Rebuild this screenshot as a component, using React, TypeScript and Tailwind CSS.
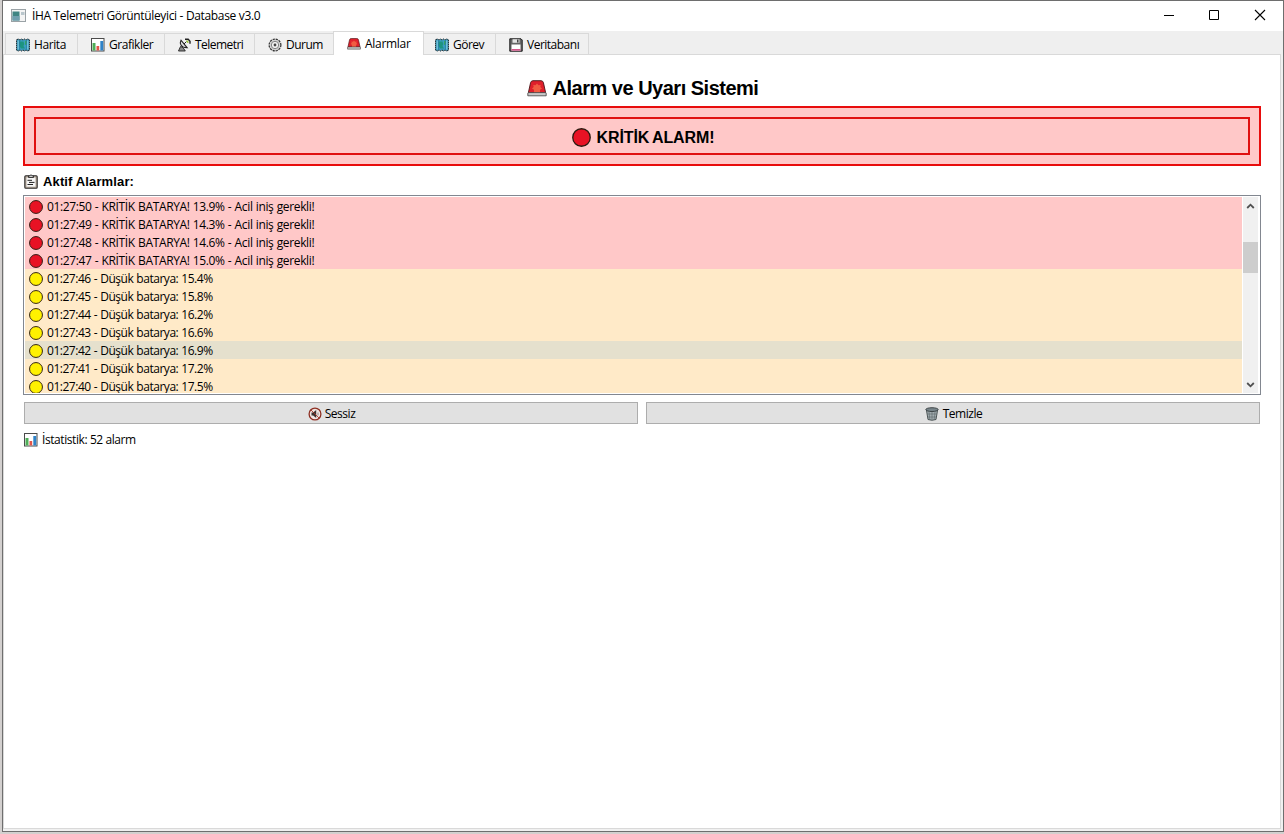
import React from 'react';

type IconProps = { className?: string };

const MapIcon = ({ className = '' }: IconProps) => (
  <svg viewBox="0 0 14 14" className={`shrink-0 ${className}`}>
    <path d="M.6 1.800 2.300 1l1.700 1 1.500-1L7 2l1.500-1L10 2l1.700-1 1.700.8v10.400l-1.700.8-1.700-1-1.500 1L7 12l-1.500 1L4 12l-1.700 1-1.700-.8z" fill="#3c9fc0" stroke="#18242c" strokeWidth="1" strokeDasharray="1.600 .5" />
    <path d="M3.500 3.500h4l.8 2.500L7.500 8 9 10.500H5L3.500 8z" fill="#1d9480" />
    <path d="M9 3h1.800l-.3 3.500-1.500.5z" fill="#38a860" />
    <path d="M2.200 2.500v9M11.800 2.500v9" stroke="#8fd3e4" strokeWidth=".9" />
    <path d="M3.600 2.500v9M10.400 2.500v9" stroke="#1f6f9a" strokeWidth=".6" />
  </svg>
);

const ChartIcon = ({ className = '' }: IconProps) => (
  <svg viewBox="0 0 14 14" className={`shrink-0 ${className}`}>
    <rect x=".5" y=".5" width="12.500" height="12.500" fill="#fff" stroke="#4b4b4b" />
    <path d="M1.500 5H4.500v7.500H1.500z" fill="#4fae58" />
    <path d="M5.500 8H8.200v4.500H5.500z" fill="#e2554a" />
    <path d="M9.300 3H12.200v9.500H9.300z" fill="#2f83c8" />
  </svg>
);

const DishIcon = ({ className = '' }: IconProps) => (
  <svg viewBox="0 0 14 14" className={`shrink-0 ${className}`}>
    <path d="M3.500 8.500 1.500 13h6.800L6 9.500z" fill="#8b8b8b" stroke="#222" strokeWidth=".9" />
    <path d="M4 2.200C2.200 5.500 4 10 10.200 9.800z" fill="#dedede" stroke="#222" strokeWidth="1.100" />
    <path d="M7 6l2.500-2.500" stroke="#222" strokeWidth="1" />
    <path d="M8 1.300h3.200L13 3.200v2.600" fill="none" stroke="#222" strokeWidth="1.400" />
    <path d="M9 2.500h2l.8 2-1.600.5z" fill="#9bc53d" />
  </svg>
);

const GearIcon = ({ className = '' }: IconProps) => (
  <svg viewBox="0 0 14 14" className={`shrink-0 ${className}`}>
    <circle cx="7" cy="7" r="5.900" fill="#d4d4d4" stroke="#333" strokeWidth="1.200" strokeDasharray="2.200 .89" />
    <circle cx="7" cy="7" r="3.700" fill="#f1f1f1" stroke="#777" strokeWidth=".9" />
    <circle cx="7" cy="7" r="1.400" fill="#444" />
  </svg>
);

const SirenIcon = ({ className = '' }: IconProps) => (
  <svg viewBox="0 0 20 17" preserveAspectRatio="none" className={`shrink-0 ${className}`}>
    <path d="M1.300 13 3.600 2.600Q4.100.7 6 .7h8q1.900 0 2.400 1.900L18.700 13z" fill="#df1f2b" stroke="#4a1417" strokeWidth=".9" />
    <path d="m10 3.600 1.500 1.600 2.200-.3-.4 2.200 1.700 1.500-2 1.100V13H7V9.700L5 8.600l1.700-1.500-.4-2.200 2.200.3z" fill="#f15c42" />
    <path d="M.8 13.200 1.600 12.600h16.800l.8.6v2.600H.8z" fill="#c9c9c9" stroke="#3c3c3c" strokeWidth=".8" />
  </svg>
);

const DiskIcon = ({ className = '' }: IconProps) => (
  <svg viewBox="0 0 14 14" className={`shrink-0 ${className}`}>
    <path d="M.8.800h11.200l1.200 1.200v11.200H.8z" fill="#666" stroke="#1e1e1e" />
    <path d="M3.500 1.200h7v3.600h-7z" fill="#e4e4e4" />
    <path d="M8 1.500h1.500v3H8z" fill="#444" />
    <path d="M2.500 6.500h9v6.200h-9z" fill="#fff" />
    <path d="M2.500 11h9v1.700h-9z" fill="#d4558a" />
  </svg>
);

const ClipboardIcon = ({ className = '' }: IconProps) => (
  <svg viewBox="0 0 14 15" className={`shrink-0 ${className}`}>
    <rect x=".8" y="1.800" width="12.400" height="12.400" rx="1" fill="#b3a698" stroke="#2b2b2b" strokeWidth="1.100" />
    <path d="M2.500 3.500h9v9.200h-9z" fill="#f5f5f5" />
    <path d="M4.500 3.500V1.800h1.200Q7-.2 8.300 1.800h1.200v1.700z" fill="#ccc" stroke="#2b2b2b" strokeWidth=".9" />
    <path d="M3.500 6.300h4.500M5 8.400h5.500M3.500 10.500h5.500" stroke="#222" strokeWidth="1" />
  </svg>
);

const MuteIcon = ({ className = '' }: IconProps) => (
  <svg viewBox="0 0 14 14" className={`shrink-0 ${className}`}>
    <circle cx="7" cy="7" r="5.900" fill="#f0e6e2" stroke="#8e2f22" strokeWidth="1.300" />
    <path d="M3.500 5.500h1.700L8.200 3v8L5.200 8.500H3.500z" fill="#3a3330" />
    <path d="m3 3 8 8" stroke="#a53828" strokeWidth=".9" />
    <path d="M10 5.500v3" stroke="#777" strokeWidth=".8" />
  </svg>
);

const TrashIcon = ({ className = '' }: IconProps) => (
  <svg viewBox="0 0 14 14" className={`shrink-0 ${className}`}>
    <path d="M1.500 3.500h11l-1.500 9Q7 14 3 12.500z" fill="#a3adb0" stroke="#40484a" strokeWidth=".9" />
    <path d="M4 5l.8 7.500M7 5v7.500M10 5l-.8 7.500M2.500 7h9M3 10h8" stroke="#5c676a" strokeWidth=".6" />
    <ellipse cx="7" cy="2.600" rx="6.200" ry="1.900" fill="#77848a" stroke="#333a3c" strokeWidth=".9" />
  </svg>
);

const Dot = ({ fill, className = '' }: { fill: string; className?: string }) => (
  <svg viewBox="0 0 14 14" className={`shrink-0 ${className}`}>
    <circle cx="7" cy="7" r="6.450" fill={fill} stroke="#2a1a10" strokeWidth=".95" />
  </svg>
);

const tabs = [
  { label: 'Harita', Icon: MapIcon, box: 'w-[73px] pl-[10px]', track: 'tracking-[-0.4px]' },
  { label: 'Grafikler', Icon: ChartIcon, box: 'w-[87px] pl-[13px]', track: 'tracking-[-0.45px]' },
  { label: 'Telemetri', Icon: DishIcon, box: 'w-[90px] pl-[12px]', track: 'tracking-[-0.55px]' },
  { label: 'Durum', Icon: GearIcon, box: 'w-[78px] pl-[13px]', track: 'tracking-[-0.5px]' },
  { label: 'Alarmlar', Icon: SirenIcon, box: 'w-[91px] pl-[13px]', track: 'tracking-[-0.3px]', active: true },
  { label: 'Görev', Icon: MapIcon, box: 'w-[72px] pl-[11px]', track: 'tracking-[-0.5px]' },
  { label: 'Veritabanı', Icon: DiskIcon, box: 'w-[93px] pl-[13px]', track: 'tracking-[-0.5px]' },
];

const alarms = [
  { time: '01:27:50', value: '13.9', critical: true },
  { time: '01:27:49', value: '14.3', critical: true },
  { time: '01:27:48', value: '14.6', critical: true },
  { time: '01:27:47', value: '15.0', critical: true },
  { time: '01:27:46', value: '15.4' },
  { time: '01:27:45', value: '15.8' },
  { time: '01:27:44', value: '16.2' },
  { time: '01:27:43', value: '16.6' },
  { time: '01:27:42', value: '16.9', hovered: true },
  { time: '01:27:41', value: '17.2' },
  { time: '01:27:40', value: '17.5' },
];

function TitleBar() {
  return (
    <div className="flex h-[30px] shrink-0 items-center bg-white pl-2">
      <svg viewBox="0 0 15 13" className="-mt-px h-[13px] w-[15px] shrink-0">
        <rect x=".5" y=".5" width="14" height="12" fill="#f4f4f4" stroke="#9aa2a6" />
        <path d="M1.500 2.500h7v9h-7z" fill="#3f8583" />
        <path d="M1.500 7h7v4.500h-7z" fill="#6f9fae" />
        <path d="M10 3h3.500v3H10z" fill="#b9c6cc" />
      </svg>
      <span className="ml-[6px] tracking-[-0.34px]">İHA Telemetri Görüntüleyici - Database v3.0</span>
      <div className="-mr-px ml-auto flex h-full">
        <svg viewBox="0 0 46 30" className="h-[30px] w-[46px]"><path d="M18 14.500h10" stroke="#000" /></svg>
        <svg viewBox="0 0 46 30" className="h-[30px] w-[46px]"><path d="M17.500 9.500h9v9h-9z" fill="none" stroke="#000" /></svg>
        <svg viewBox="0 0 46 30" className="h-[30px] w-[46px]"><path d="m17 9 10 10M27 9 17 19" stroke="#000" strokeWidth="1.100" /></svg>
      </div>
    </div>
  );
}

function TabBar() {
  return (
    <div className="flex h-[23px] shrink-0 items-end bg-[#efefef] pl-[2px]">
      {tabs.map(({ label, Icon, box, track, active }, i) => (
        <div
          key={label}
          className={`flex shrink-0 items-center border-[#d9d9d9] ${box} ${
            active
              ? 'z-10 -mb-px h-[24px] border-x border-t bg-white'
              : `h-[21px] border-t bg-[#f0f0f0] ${i === 0 ? 'border-l' : ''} ${i === 3 ? '' : 'border-r'}`
          }`}
        >
          <Icon className={active ? 'h-[12px] w-[14px]' : 'mt-px h-[14px] w-[14px]'} />
          <span className={`ml-1 ${track} ${active ? '' : 'mt-px'}`}>{label}</span>
        </div>
      ))}
    </div>
  );
}

function AlarmList() {
  return (
    <div className="mt-[5px] flex h-[200px] border border-[#828790] bg-white p-px">
      <div className="h-[196px] flex-1 overflow-hidden">
        {alarms.map((a) => (
          <div
            key={a.time}
            className={`flex h-[18px] items-center pl-1 pt-px ${a.critical ? 'bg-[#ffc8c8]' : a.hovered ? 'bg-[#e5e0cd]' : 'bg-[#ffeac8]'}`}
          >
            <Dot fill={a.critical ? '#e81224' : '#fff100'} className="h-[14px] w-[14px]" />
            <span className={`ml-1 ${a.critical ? 'tracking-[-0.36px] [word-spacing:0.47px]' : 'tracking-[-0.47px] [word-spacing:0.4px]'}`}>
              {a.critical ? `${a.time} - KRİTİK BATARYA! ${a.value}% - Acil iniş gerekli!` : `${a.time} - Düşük batarya: ${a.value}%`}
            </span>
          </div>
        ))}
      </div>
      <div className="ml-px mr-px flex w-[15px] flex-col items-center bg-[#f0f0f0]">
        <svg viewBox="0 0 15 17" className="h-[17px] w-[15px]"><path d="m4.200 11 3.300-3.300 3.300 3.300" fill="none" stroke="#505050" strokeWidth="1.800" /></svg>
        <div className="mt-7 h-[31px] w-full bg-[#cdcdcd]" />
        <svg viewBox="0 0 15 17" className="mt-auto h-[17px] w-[15px]"><path d="m4.200 7 3.300 3.300L10.800 7" fill="none" stroke="#505050" strokeWidth="1.800" /></svg>
      </div>
    </div>
  );
}

const buttonClass = 'flex h-[22px] flex-1 items-center justify-center border border-[#adadad] bg-[#e1e1e1] pt-px pl-px';

export default function App() {
  return (
    <div className="h-[834px] w-[1284px] overflow-hidden bg-[#d3d0cf] pb-[2px] pl-[2px] font-['Open_Sans','Noto_Sans',sans-serif] text-[12px] leading-[16px] text-black">
      <div className="flex h-full w-full flex-col border border-[#6e6e6e] bg-[#f0f0f0]">
        <TitleBar />
        <TabBar />
        <main className="mr-[2px] mb-[2px] flex flex-1 flex-col border border-[#d9d9d9] bg-white pr-[19px] pl-[19px] font-normal">
          <h1 className="mt-[22px] flex h-[22px] items-center justify-center pl-px font-['Liberation_Sans',sans-serif] text-[20px] font-bold leading-[22px]">
            <SirenIcon className="h-[17px] w-[20px]" />
            <span className="ml-[6px] tracking-[-0.5px]">Alarm ve Uyarı Sistemi</span>
          </h1>
          <div className="mt-[7px] h-[60px] border-2 border-[#e80c0c] bg-[#ffc8c8] p-[9px]">
            <div className="flex h-[38px] items-center justify-center border-2 border-[#e01010] pt-[2px] pl-[2px] font-['Liberation_Sans',sans-serif] text-[16px] font-bold">
              <Dot fill="#e81224" className="h-[19px] w-[19px]" />
              <span className="mt-px ml-[6px] tracking-[-0.1px] [word-spacing:-1px]">KRİTİK ALARM!</span>
            </div>
          </div>
          <div className="mt-2 flex h-4 items-center font-['Liberation_Sans',sans-serif] text-[13px] font-bold">
            <ClipboardIcon className="-mt-px ml-px h-[15px] w-[14px]" />
            <span className="ml-[5px] tracking-[0.13px]">Aktif Alarmlar:</span>
          </div>
          <AlarmList />
          <div className="mt-[7px] flex gap-2 px-px">
            <button className={buttonClass}>
              <MuteIcon className="h-[14px] w-[14px]" />
              <span className="ml-[3px] tracking-[-0.45px]">Sessiz</span>
            </button>
            <button className={buttonClass}>
              <TrashIcon className="h-[14px] w-[14px]" />
              <span className="ml-1 tracking-[-0.45px]">Temizle</span>
            </button>
          </div>
          <div className="mt-2 flex h-4 items-center pl-px">
            <ChartIcon className="h-[14px] w-[14px]" />
            <span className="ml-[4px] tracking-[-0.42px]">İstatistik: 52 alarm</span>
          </div>
        </main>
      </div>
    </div>
  );
}
